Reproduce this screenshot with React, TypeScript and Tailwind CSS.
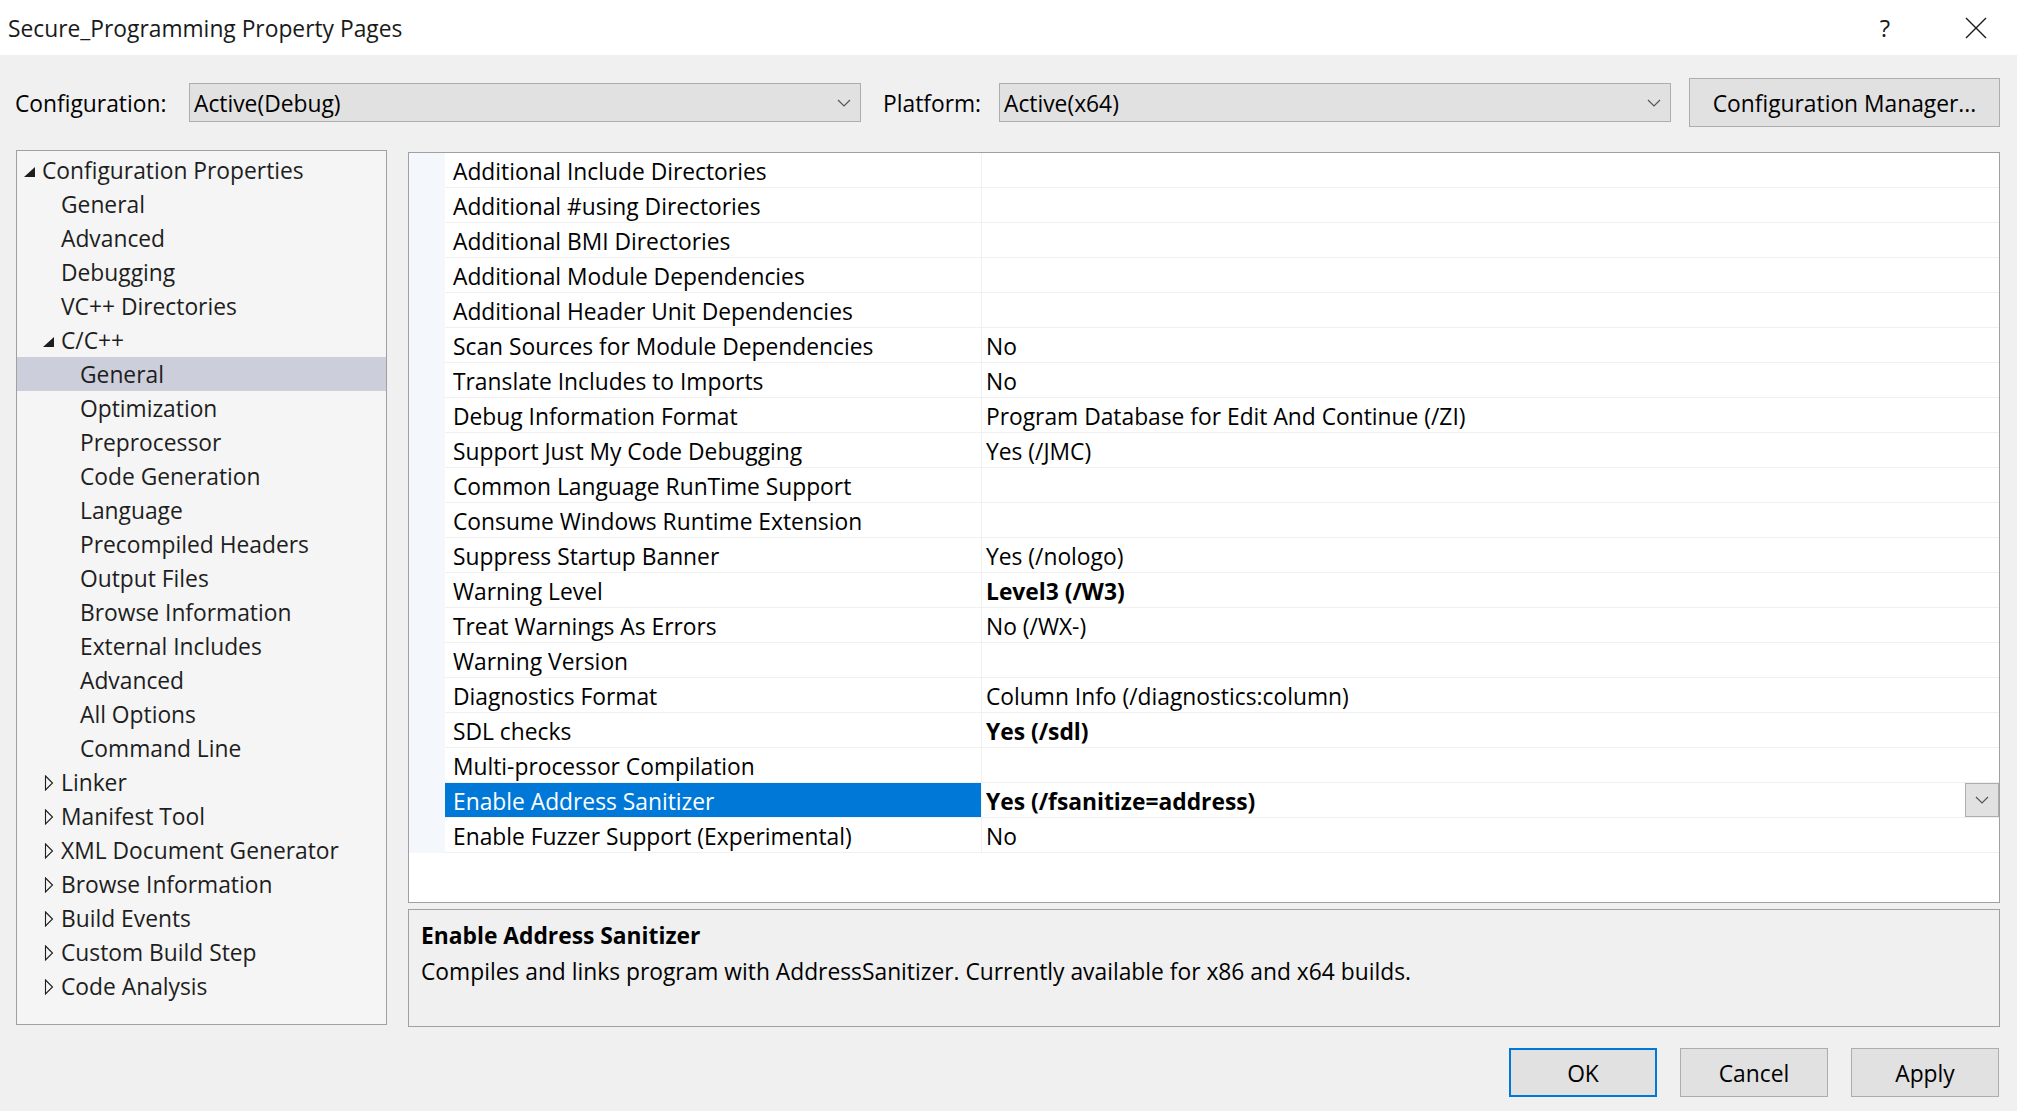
import React from "react";

type TreeItem = { label: string; level: number; icon?: "open" | "closed"; selected?: boolean };

const tree: TreeItem[] = [
  { label: "Configuration Properties", level: 0, icon: "open" },
  { label: "General", level: 1 },
  { label: "Advanced", level: 1 },
  { label: "Debugging", level: 1 },
  { label: "VC++ Directories", level: 1 },
  { label: "C/C++", level: 1, icon: "open" },
  { label: "General", level: 2, selected: true },
  { label: "Optimization", level: 2 },
  { label: "Preprocessor", level: 2 },
  { label: "Code Generation", level: 2 },
  { label: "Language", level: 2 },
  { label: "Precompiled Headers", level: 2 },
  { label: "Output Files", level: 2 },
  { label: "Browse Information", level: 2 },
  { label: "External Includes", level: 2 },
  { label: "Advanced", level: 2 },
  { label: "All Options", level: 2 },
  { label: "Command Line", level: 2 },
  { label: "Linker", level: 1, icon: "closed" },
  { label: "Manifest Tool", level: 1, icon: "closed" },
  { label: "XML Document Generator", level: 1, icon: "closed" },
  { label: "Browse Information", level: 1, icon: "closed" },
  { label: "Build Events", level: 1, icon: "closed" },
  { label: "Custom Build Step", level: 1, icon: "closed" },
  { label: "Code Analysis", level: 1, icon: "closed" },
];

type Prop = { name: string; value?: string; bold?: boolean; selected?: boolean };

const props: Prop[] = [
  { name: "Additional Include Directories" },
  { name: "Additional #using Directories" },
  { name: "Additional BMI Directories" },
  { name: "Additional Module Dependencies" },
  { name: "Additional Header Unit Dependencies" },
  { name: "Scan Sources for Module Dependencies", value: "No" },
  { name: "Translate Includes to Imports", value: "No" },
  { name: "Debug Information Format", value: "Program Database for Edit And Continue (/ZI)" },
  { name: "Support Just My Code Debugging", value: "Yes (/JMC)" },
  { name: "Common Language RunTime Support" },
  { name: "Consume Windows Runtime Extension" },
  { name: "Suppress Startup Banner", value: "Yes (/nologo)" },
  { name: "Warning Level", value: "Level3 (/W3)", bold: true },
  { name: "Treat Warnings As Errors", value: "No (/WX-)" },
  { name: "Warning Version" },
  { name: "Diagnostics Format", value: "Column Info (/diagnostics:column)" },
  { name: "SDL checks", value: "Yes (/sdl)", bold: true },
  { name: "Multi-processor Compilation" },
  { name: "Enable Address Sanitizer", value: "Yes (/fsanitize=address)", bold: true, selected: true },
  { name: "Enable Fuzzer Support (Experimental)", value: "No" },
];

function Chevron({ className = "" }: { className?: string }) {
  return (
    <svg width="14" height="8" viewBox="0 0 14 8" className={className}>
      <path d="M1 1 L7 7 L13 1" fill="none" stroke="#555" strokeWidth="1.2" />
    </svg>
  );
}

function OpenTri() {
  return (
    <svg width="11" height="10" viewBox="0 0 11 10">
      <path d="M11 0 L11 10 L0 10 Z" fill="#1e1e1e" />
    </svg>
  );
}

function ClosedTri() {
  return (
    <svg width="10" height="16" viewBox="0 0 10 16">
      <path d="M1.5 1 L8.5 8 L1.5 15 Z" fill="none" stroke="#1e1e1e" strokeWidth="1.1" />
    </svg>
  );
}

function TreeRow({ item }: { item: TreeItem }) {
  const pad = item.level === 0 ? "pl-[7px]" : item.level === 1 ? "pl-[26px]" : "pl-[45px]";
  return (
    <div
      className={`flex h-[34px] items-center ${pad} ${item.selected ? "bg-[#cccedb]" : ""}`}
    >
      <div className="flex w-[18px] items-center">
        {item.icon === "open" && (
          <span className="mt-[4px] flex">
            <OpenTri />
          </span>
        )}
        {item.icon === "closed" && (
          <span className="ml-[1px] mt-[2px] flex">
            <ClosedTri />
          </span>
        )}
      </div>
      <span className="whitespace-nowrap pt-[3px] leading-none text-[#1e1e1e]">{item.label}</span>
    </div>
  );
}

function PropRow({ p }: { p: Prop }) {
  return (
    <div className="flex h-[35px]">
      <div className="w-[36px] shrink-0 bg-[#f4f7fc]" />
      <div
        className={`flex w-[536px] shrink-0 items-center border-b border-[#f0f0f0] pl-[8px] pt-[4px] whitespace-nowrap ${
          p.selected ? "bg-[#0078d7] text-white" : "text-black"
        }`}
      >
        {p.name}
      </div>
      <div className="flex flex-1 items-center justify-between border-b border-l border-[#f0f0f0] pl-[4px] whitespace-nowrap">
        <span className={`pt-[4px] ${p.bold ? "font-bold text-black" : "text-black"}`}>{p.value ?? ""}</span>
        {p.selected && (
          <div className="flex h-[34px] w-[34px] items-center justify-center border border-[#adadad] bg-[#e1e1e1]">
            <Chevron />
          </div>
        )}
      </div>
    </div>
  );
}

function Dropdown({ text }: { text: string }) {
  return (
    <div className="flex h-[39px] w-[672px] shrink-0 items-center justify-between border border-[#adadad] bg-[#e1e1e1] pl-[4px] pr-[9px]">
      <span className="whitespace-nowrap pt-[3px] text-black">{text}</span>
      <Chevron />
    </div>
  );
}

function Button({ label, primary }: { label: string; primary?: boolean }) {
  return (
    <div
      className={`flex h-[49px] w-[148px] items-center justify-center bg-[#e1e1e1] pt-[3px] text-black ${
        primary ? "border-2 border-[#0078d7]" : "border border-[#adadad]"
      }`}
    >
      {label}
    </div>
  );
}

export default function App() {
  return (
    <div
      className="flex h-[1111px] w-[2017px] flex-col overflow-hidden bg-[#f0f0f0] text-[22.8px] text-black"
      style={{ fontFamily: "'Open Sans', 'Noto Sans', sans-serif" }}
    >
      {/* Title bar */}
      <div className="flex h-[55px] shrink-0 items-center justify-between bg-white pl-[8px] pr-[21px]">
        <span className="whitespace-nowrap pt-[3px] text-[#1a1a1a]">Secure_Programming Property Pages</span>
        <div className="flex items-center gap-[51px]">
          <span className="flex w-[40px] justify-center text-[24px] text-[#1a1a1a]">?</span>
          <span className="flex w-[40px] justify-center">
            <svg width="22" height="22" viewBox="0 0 22 22">
              <path d="M1 1 L21 21 M21 1 L1 21" stroke="#1a1a1a" strokeWidth="1.4" />
            </svg>
          </span>
        </div>
      </div>

      {/* Configuration row */}
      <div className="mt-[23px] flex h-[49px] shrink-0 items-center pl-[15px]">
        <span className="w-[174px] shrink-0 whitespace-nowrap pt-[3px]">Configuration:</span>
        <Dropdown text="Active(Debug)" />
        <span className="ml-[22px] w-[116px] shrink-0 whitespace-nowrap pt-[3px]">Platform:</span>
        <Dropdown text="Active(x64)" />
        <div className="ml-[18px] flex h-[49px] w-[311px] shrink-0 items-center justify-center border border-[#adadad] bg-[#e1e1e1] pt-[3px] whitespace-nowrap">
          Configuration Manager...
        </div>
      </div>

      {/* Main */}
      <div className="mt-[23px] flex h-[877px] shrink-0 pl-[16px]">
        <div className="h-[875px] w-[371px] shrink-0 border border-[#a0a0a0] bg-[#f5f5f5] pt-[2px]">
          {tree.map((t, i) => (
            <TreeRow key={i} item={t} />
          ))}
        </div>
        <div className="ml-[21px] flex w-[1592px] flex-col">
          <div className="mt-[2px] h-[751px] border border-[#a0a0a0] bg-white">
            {props.map((p, i) => (
              <PropRow key={i} p={p} />
            ))}
          </div>
          <div className="mt-[6px] h-[118px] border border-[#a0a0a0] bg-[#f0f0f0] pl-[12px] pt-[10px]">
            <div className="font-bold leading-[32px]">Enable Address Sanitizer</div>
            <div className="mt-[4px] leading-[32px]">
              Compiles and links program with AddressSanitizer. Currently available for x86 and x64 builds.
            </div>
          </div>
        </div>
      </div>

      {/* Buttons */}
      <div className="mt-[21px] flex shrink-0 justify-end gap-[23px] pr-[18px]">
        <Button label="OK" primary />
        <Button label="Cancel" />
        <Button label="Apply" />
      </div>
    </div>
  );
}
